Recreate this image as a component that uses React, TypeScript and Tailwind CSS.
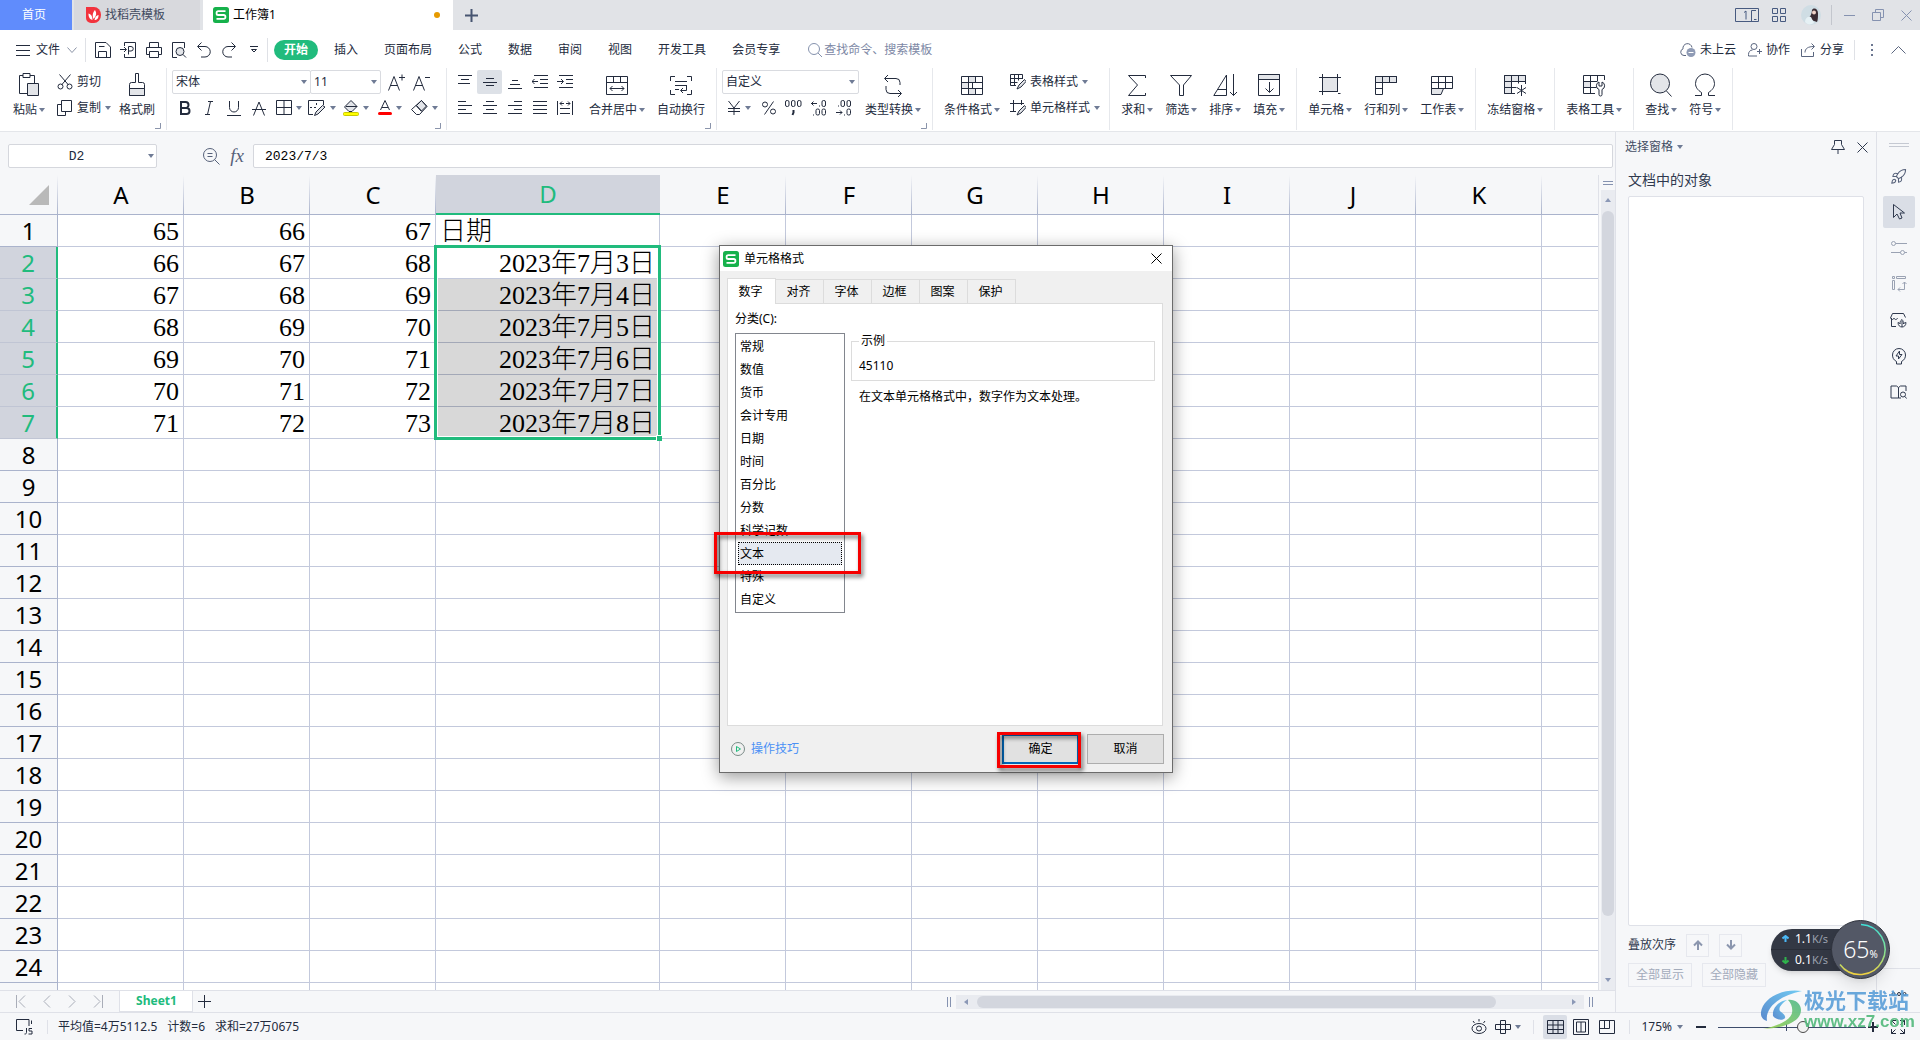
import React from "react";
import { Rocket } from "lucide-react";

type Kids = { children?: React.ReactNode };

function Svg({ w, h, sw = 1, className = "", children }: Kids & { w: number; h: number; sw?: number; className?: string }) {
  return (
    <svg width={w} height={h} viewBox={`0 0 ${w} ${h}`} fill="none" stroke="currentColor" strokeWidth={sw} className={"block shrink-0 " + className} aria-hidden="true">
      {children}
    </svg>
  );
}

const Caret = ({ className = "" }: { className?: string }) => (
  <svg width="6" height="4" viewBox="0 0 6 4" className={"block shrink-0 " + className} aria-hidden="true">
    <path d="M0 0h6L3 4z" fill="#6f7b95" />
  </svg>
);

const LogoS = () => (
  <svg width="16" height="16" viewBox="0 0 16 16" className="block shrink-0" aria-hidden="true">
    <rect width="16" height="16" rx="2.5" fill="#16b14b" />
    <path d="M12.5 4.2H5.2a1.6 1.6 0 0 0-1.6 1.6v.6A1.6 1.6 0 0 0 5.2 8h5.6a1.6 1.6 0 0 1 1.6 1.6v.6a1.6 1.6 0 0 1-1.6 1.6H3.5" fill="none" stroke="#fff" strokeWidth="1.8" />
  </svg>
);

/* ---------- ribbon icons ---------- */

const soft = "#e3e5e9";

const IcPaste = () => (
  <Svg w={24} h={24}>
    <path d="M10 20.5H2.5V2.5H6M13 2.5h4.5V10M6 .5h7v4H6z" />
    <path d="M10.5 10.5h11v12h-11z" fill={soft} />
  </Svg>
);
const IcCut = () => (
  <Svg w={16} h={16}>
    <path d="M2.5.5 11.5 11M13.5.5 4.5 11" />
    <circle cx="3.5" cy="12.5" r="2.5" />
    <circle cx="12.5" cy="12.5" r="2.5" />
  </Svg>
);
const IcCopy = () => (
  <Svg w={16} h={16}>
    <path d="M4.5.5h10v11h-10zM4.5 4.5h-4v11h8v-4" />
  </Svg>
);
const IcBrush = () => (
  <Svg w={24} h={24}>
    <path d="M10.5.5h3v9h4a2 2 0 0 1 2 2v11h-15v-11a2 2 0 0 1 2-2h4z" />
    <path d="M4.5 15.5h15v7h-15z" fill={soft} />
  </Svg>
);
const IcMerge = () => (
  <Svg w={24} h={24}>
    <path d="M1.5 3.5h21v18h-21zM1.5 9.5h21M8.5 3.5v6M15.5 3.5v6M5 15.5h14M7.5 13 5 15.5 7.5 18M16.5 13l2.5 2.5-2.5 2.5" />
  </Svg>
);
const IcWrap = () => (
  <Svg w={24} h={24}>
    <path d="M6 3.5H1.5V8M18 3.5h4.5V8M6 21.5H1.5V17M18 21.5h4.5V17M6 8.5h12M6 12.5h12M6 16.5h4M17.5 12.5v5H12M14 15l-2.5 2.5L14 20" />
  </Svg>
);
const IcConvert = () => (
  <Svg w={24} h={24}>
    <path d="M4 5.5h11a4 4 0 0 1 4 4V12M20 20.5H9a4 4 0 0 1-4-4V13M7 2 3.5 5.5 7 9M17 17l3.5 3.5L17 24" />
  </Svg>
);
const IcCond = () => (
  <Svg w={24} h={24}>
    <path d="M8.5 3.5h7v6h-7zM1.5 9.5h7v6h-7zM8.5 15.5h7v6h-7z" fill={soft} />
    <path d="M1.5 3.5h21v18h-21zM1.5 9.5h21M1.5 15.5h21M8.5 3.5v18M15.5 3.5v6M15.5 15.5v6M12.5 9.5v6" />
  </Svg>
);
const IcTableStyle = () => (
  <Svg w={16} h={16}>
    <path d="M6 11.5H.5V.5h12V5M.5 4.5h12M.5 8.5h7M4.5.5v11M8.5.5v6" />
    <path d="M14.5 5.5 9 11l-2 4 4-2 5-5.5z" fill={soft} />
  </Svg>
);
const IcCellStyle = () => (
  <Svg w={16} h={16}>
    <path d="M3.5 0v12M0 3.5h14M0 11.5h6M11.5 0v5" />
    <path d="M14.5 5.5 9 11l-2 4 4-2 5-5.5z" fill={soft} />
  </Svg>
);
const IcSum = () => (
  <Svg w={24} h={24}>
    <path d="M20.500 5V2.500h-17l9 9.500-9 10.500h17V20" />
  </Svg>
);
const IcFilter = () => (
  <Svg w={24} h={24}>
    <path d="M1.500 2.500h21L14.500 12v10.500h-4V12z" />
  </Svg>
);
const IcSort = () => (
  <Svg w={24} h={24}>
    <path d="M13.500 22.500V2L.8 22.500zM4.500 16.500h9M20.500 1v21.500M17 19l3.500 3.500L24 19" />
  </Svg>
);
const IcFill = () => (
  <Svg w={24} h={24}>
    <path d="M1.500 1.500h21v5h-21z" fill={soft} />
    <path d="M1.500 1.500h21v21h-21zM12.500 9v10M8.500 15.500l4 4 4-4" />
  </Svg>
);
const IcCell = () => (
  <Svg w={24} h={24}>
    <path d="M4.500 4.500h15v14h-15z" fill={soft} />
    <path d="M4.500 1v21M19.500 1v17M1 4.500h22M1 18.500h19M20 20.500h2.500" />
  </Svg>
);
const IcRowCol = () => (
  <Svg w={24} h={24}>
    <path d="M1.500 3.500h21v6h-21z" fill={soft} />
    <path d="M1.500 3.500h7v18h-7zM8.500 9.500h14v-6h-14M15.500 3.500v6M1.500 9.500h7M1.500 15.500h7" />
  </Svg>
);
const IcSheet = () => (
  <Svg w={24} h={24}>
    <path d="M1.500 15.500h12l-2.500 6H1.500z" fill={soft} />
    <path d="M22.500 15.500h-21v-12h21zM1.500 9.500h21M8.500 3.500v12M15.500 3.500v12" />
  </Svg>
);
const IcFreeze = () => (
  <Svg w={24} h={24}>
    <path d="M1.500 2.500h21v6h-21zM1.500 8.500h7v12h-7z" fill={soft} />
    <path d="M12 20.500H1.500v-18h21V11M1.500 8.500h21M1.500 14.500h12M8.500 2.500v18M15.500 2.500v8M18.500 12v11M14 14.500l9 6M23 14.500l-9 6" />
  </Svg>
);
const IcTools = () => (
  <Svg w={24} h={24}>
    <path d="M1.500 8.500h7v6h-7z" fill={soft} />
    <path d="M13 20.500H1.500v-18h21V7M1.500 8.500H15M1.500 14.500h13M8.500 2.500v18M15.500 2.500v6" />
    <path d="M17 9v4h3V9a4 4 0 0 1 0 7.500v5a1.500 1.500 0 0 1-3 0v-5A4 4 0 0 1 17 9z" fill="#fff" />
  </Svg>
);
const IcFind = () => (
  <Svg w={24} h={24}>
    <circle cx="11" cy="10.500" r="9.500" fill={soft} />
    <path d="m17.500 18 5 5.500" />
  </Svg>
);
const IcOmega = () => (
  <Svg w={24} h={24}>
    <path d="M2 22.500h6.500v-3C4.500 17 2.500 14 2.500 10.500a9.500 9.500 0 0 1 19 0c0 3.500-2 6.500-6 9v3H22" />
  </Svg>
);

/* ---------- ribbon pieces ---------- */

function Big({ icon, label, caret = true }: { icon: React.ReactNode; label: string; caret?: boolean }) {
  return (
    <button className="flex shrink-0 flex-col items-center px-[6px] pt-[3px]">
      {icon}
      <span className="mt-[5px] flex items-center gap-[2px] leading-4">
        {label}
        {caret && <Caret />}
      </span>
    </button>
  );
}

function Small({ icon, label, caret = false }: { icon: React.ReactNode; label: string; caret?: boolean }) {
  return (
    <button className="flex h-6 items-center gap-1">
      {icon}
      <span className="flex items-center gap-1">
        {label}
        {caret && <Caret />}
      </span>
    </button>
  );
}

const Sep = () => <span className="-mt-[2px] mx-[5px] block h-[62px] w-px shrink-0 bg-[#e6e8ec]" />;

const Corner = () => (
  <span className="absolute right-0 top-[53px] text-[#8a94ab]">
    <Svg w={6} h={6}>
      <path d="M5.500 0v5.500H0" />
    </Svg>
  </span>
);

const Tool = ({ label, wide = false, children }: Kids & { label: string; wide?: boolean }) => (
  <button aria-label={label} className={wide ? "flex h-6 w-[34px] items-center justify-center gap-1" : "flex h-6 w-[25px] items-center justify-center"}>
    {children}
    {wide && <Caret />}
  </button>
);

function Select({ label, value, className }: { label: string; value: string; className: string }) {
  return (
    <span className={"relative block " + className}>
      <select aria-label={label} className="h-6 w-full appearance-none rounded-[2px] border border-[#d9dbe0] bg-white pl-[3px] outline-none">
        <option>{value}</option>
      </select>
      <Caret className="pointer-events-none absolute right-1 top-[10px]" />
    </span>
  );
}

const Lines = ({ rows }: { rows: [number, number, number][] }) => (
  <Svg w={16} h={16}>
    {rows.map(([x1, x2, y]) => (
      <path key={y} d={`M${x1} ${y}.5H${x2}`} />
    ))}
  </Svg>
);

function TitleBar() {
  return (
    <header className="flex h-[30px] shrink-0 items-stretch bg-[#e1e3e7]">
      <button className="w-[72px] bg-[#608cfc] pr-1 text-white">首页</button>
      <button className="ml-[2px] flex w-[126px] items-center gap-1 bg-[#d8d9dd] pl-3 text-[#414a5f]">
        <svg width="15" height="16" viewBox="0 0 15 16" aria-hidden="true">
          <path d="M0 0h8a7 8 0 0 1 0 16H5a5 5 0 0 1-5-5z" fill="#f2333d" />
          <path d="M6.500 13C3 12 2.500 9 2.500 6.500 5 7 6.500 9 6.500 13zM7.500 12C6 8 7 5 9 3c2 3 1.500 6-1.500 9zM8.500 13c.5-3 2-4.500 4-5 .3 3-1.500 5-4 5z" fill="#fff" />
        </svg>
        找稻壳模板
      </button>
      <button className="ml-[3px] flex w-[250px] items-center gap-1 bg-white pl-[10px] pr-[13px] text-black">
        <LogoS />
        工作簿1
        <span className="ml-auto size-[6px] rounded-full bg-[#e69a00]" />
      </button>
      <button aria-label="新建" className="ml-3 text-[#475571]">
        <Svg w={13} h={13} sw={2}>
          <path d="M6.500 0v13M0 6.500h13" />
        </Svg>
      </button>
      <div className="ml-auto flex items-center pr-2 text-[#475a80]">
        <Svg w={24} h={14}>
          <path d="M.5.5h23v13H.5zM21 2.500h-4.500v11M19 11.500h2.500M9 4.500l2-1.500v8.500" />
        </Svg>
        <Svg w={14} h={14} className="ml-[13px]">
          <path d="M.5.5h5v5h-5zM8.500.5h5v5h-5zM.5 8.500h5v5h-5zM8.500 8.500h5v5h-5z" />
        </Svg>
        <svg width="20" height="20" viewBox="0 0 20 20" className="ml-[15px]" aria-hidden="true">
          <circle cx="10" cy="10" r="10" fill="#cfdde4" />
          <path d="M11 5c2-3 6-1 6 3 0 3 0 7-1 9l-3-1-6-3c2-1 4-4 4-8z" fill="#3a2c33" />
          <circle cx="13" cy="7.500" r="2" fill="#f0d3c8" />
          <path d="M4 17c0-4 3-6 6-5l3 6c-3 2-7 2-9-1z" fill="#e6f1f5" />
        </svg>
        <span className="ml-[10px] h-5 w-px bg-[#c3c6cd]" />
        <div className="ml-3 flex items-center gap-[17px] text-[#8592b0]">
          <button aria-label="最小化">
            <Svg w={11} h={11}><path d="M0 5.500h11" /></Svg>
          </button>
          <button aria-label="还原">
            <Svg w={12} h={12}><path d="M3.500 3V.5h8v8H9M.5 3.500h8v8h-8z" /></Svg>
          </button>
          <button aria-label="关闭">
            <Svg w={11} h={11}><path d="m.5.5 10 10M10.500.5l-10 10" /></Svg>
          </button>
        </div>
      </div>
    </header>
  );
}

function MenuBar() {
  const menus = ["插入", "页面布局", "公式", "数据", "审阅", "视图", "开发工具", "会员专享"];
  return (
    <nav className="flex h-[38px] shrink-0 items-center bg-white pl-4 pt-px">
      <button className="flex items-center gap-[6px]">
        <Svg w={14} h={12}><path d="M0 1.500h14M0 6.500h14M0 11.500h14" /></Svg>
        文件
        <Svg w={10} h={6} className="ml-[1px] text-[#8a93a6]"><path d="m.5.5 4.500 5L9.500.5" /></Svg>
      </button>
      <span className="ml-2 h-6 w-px bg-[#dfe1e6]" />
      <div className="ml-[9px] flex items-center gap-[9px]">
        <button aria-label="保存"><Svg w={16} h={16}><path d="M.5.5H11l4.500 4.500v10.500H.5zM3.500 15.500v-6h8v6M4 4.500h5.500" /></Svg></button>
        <button aria-label="输出为PDF"><Svg w={17} h={16}><path d="M4.500 4V.5h11v15h-11V12M0 7.500h6M4 5l2.500 2.500L4 10M8.500 12.500V4.500h2.500a2.200 2.200 0 0 1 0 4.500H8" /></Svg></button>
        <button aria-label="打印"><Svg w={16} h={16}><path d="M3.500 5V.5h9V5M3.500 12.500h-3v-7h15v7h-3M3.500 9.500h9v6h-9z" /></Svg></button>
        <button aria-label="打印预览"><Svg w={16} h={16}><path d="M6 15.500H1.500V.5h12V6" /><circle cx="9" cy="9.500" r="4" fill={soft} /><path d="m12 12.500 3 3" /></Svg></button>
        <button aria-label="撤销"><Svg w={16} h={16}><path d="M5.500.5 1.500 4.500l4 4M2 4.500h7a5 5 0 0 1 0 10.500H5" /></Svg></button>
        <button aria-label="恢复"><Svg w={16} h={16}><path d="m10.500.5 4 4-4 4M14 4.500H7A5 5 0 0 0 7 15h4" /></Svg></button>
        <button aria-label="更多" className="px-1"><Svg w={8} h={8}><path d="M0 .5h8M1.500 3.500 4 6l2.500-2.500z" /></Svg></button>
      </div>
      <span className="ml-[5px] h-6 w-px bg-[#dfe1e6]" />
      <button className="ml-[6px] h-5 w-11 rounded-full bg-[#21bb7d] font-bold leading-5 text-white">开始</button>
      <div className="ml-4 flex gap-[26px]">
        {menus.map((m) => <button key={m} className="whitespace-nowrap">{m}</button>)}
      </div>
      <label className="ml-7 flex items-center gap-[2px] text-[#8592ad]">
        <Svg w={14} h={14}><circle cx="6" cy="6" r="5.500" /><path d="m10 10 4 4" /></Svg>
        <input aria-label="查找命令、搜索模板" placeholder="查找命令、搜索模板" className="w-32 outline-none placeholder:text-[#7d88a5]" />
      </label>
      <div className="ml-auto flex items-center whitespace-nowrap pr-[14px]">
        <button className="flex items-center gap-1">
          <Svg w={16} h={14} className="text-[#5b667f]">
            <path d="M6 12.500H4a3.400 3.400 0 0 1-1-6.600A4.500 4.500 0 0 1 12 4.500" />
            <circle cx="11" cy="9.500" r="4.500" fill="#8f9bb5" stroke="none" />
            <path d="M8.500 9.500h5" stroke="#fff" />
          </Svg>
          未上云
        </button>
        <button className="ml-3 flex items-center gap-1">
          <Svg w={14} h={14} className="text-[#5b667f]"><circle cx="6" cy="3.500" r="3" /><path d="M4.500 7C2 7 .5 9 .5 11.500v1.500H9M11.500 6v5M9 8.500h5" /></Svg>
          协作
        </button>
        <button className="ml-[11px] flex items-center gap-1">
          <Svg w={15} h={14} className="text-[#5b667f]"><path d="M.5 6v7.500h12V9M4 9.500c0-4 3-6 9-6M10.500.5l3 3-3 3" /></Svg>
          分享
        </button>
        <span className="ml-[10px] h-5 w-px bg-[#dfe1e6]" />
        <Svg w={2} h={12} sw={2} className="ml-4 text-[#6b7690]"><path d="M1 0v2M1 5v2M1 10v2" /></Svg>
        <Svg w={15} h={8} className="ml-[18px] text-[#5b667f]"><path d="m.5 7.500 7-7 7 7" /></Svg>
      </div>
    </nav>
  );
}

function Ribbon() {
  return (
    <div className="relative z-10 flex h-16 shrink-0 items-start overflow-hidden whitespace-nowrap border-b border-[#e4e6ea] bg-white pl-[7px] pt-[2px]">
      <div className="relative flex">
        <Big icon={<IcPaste />} label="粘贴" />
        <div className="flex flex-col gap-[2px] pl-[6px] pr-[2px]">
          <Small icon={<IcCut />} label="剪切" />
          <Small icon={<IcCopy />} label="复制" caret />
        </div>
        <Big icon={<IcBrush />} label="格式刷" caret={false} />
        <Corner />
      </div>
      <Sep />
      <div className="relative flex w-[269px] flex-col gap-[2px]">
        <div className="flex">
          <Select label="字体" value="宋体" className="w-[139px]" />
          <Select label="字号" value="11" className="-ml-px w-[71px]" />
          <button aria-label="增大字号" className="ml-[7px]"><Svg w={17} h={17}><path d="M.5 16.500 6 2.500l5.500 14M2.500 11.500h7M14 .5v6M11 3.500h6" /></Svg></button>
          <button aria-label="减小字号" className="ml-2"><Svg w={17} h={17}><path d="M.5 16.500 6 2.500l5.500 14M2.500 11.500h7M12 3.500h5" /></Svg></button>
        </div>
        <div className="flex">
          <Tool label="加粗"><Svg w={12} h={14} sw={2}><path d="M2 1h4.500a3 3 0 0 1 0 6H2zM2 7h5.500a3 3 0 0 1 0 6H2z" /></Svg></Tool>
          <Tool label="倾斜"><Svg w={12} h={14}><path d="M5 .5h5M2 13.500h5M7.500.5l-3 13" /></Svg></Tool>
          <Tool label="下划线"><Svg w={14} h={15}><path d="M2.500 0v6.500a4.500 4.500 0 0 0 9 0V0M0 14.500h14" /></Svg></Tool>
          <Tool label="删除线"><Svg w={14} h={15}><path d="M1.500 14.500 7 1l5.500 13.500M0 8.500h14" /></Svg></Tool>
          <Tool label="边框" wide><Svg w={16} h={16}><path d="M.5.5h15v14H.5zM8 .5v14M.5 7.500h15" /></Svg></Tool>
          <Tool label="绘图边框" wide><Svg w={18} h={16}><path d="M5 14.500H.5V.5h15V5M2 7.500h2M6 7.500h2M8.500 3v2" /><path d="M14.500 5.500 8 12l-1.500 3.500L10 14l7-7z" fill={soft} /></Svg></Tool>
          <Tool label="填充颜色" wide><Svg w={16} h={16}><path d="m8 .5 6 6-5 5H6L1.500 7z" fill={soft} /><path d="M3 6.500h11" /><rect x=".5" y="12.500" width="15" height="3" rx="1" fill="#ff0" stroke="#c9c900" /></Svg></Tool>
          <Tool label="字体颜色" wide><Svg w={14} h={16}><path d="M2.500 10 7 .5 11.500 10M4 7.500h6" /><rect y="12" width="14" height="3" rx="1.500" fill="#f00" stroke="none" /></Svg></Tool>
          <Tool label="清除" wide><Svg w={17} h={16}><path d="m5.500 5.500 5-5 5 5.500-5 5z" fill={soft} /><path d="M10.500.5.5 9.500l5 5h3l7.500-8zM5 5.500l5.500 6" /></Svg></Tool>
        </div>
        <Corner />
      </div>
      <Sep />
      <div className="flex flex-col gap-[2px]">
        <div className="flex">
          <Tool label="顶端对齐"><Lines rows={[[1, 15, 1], [4, 12, 5], [1, 13, 9]]} /></Tool>
          <button aria-label="垂直居中" aria-pressed="true" className="flex h-6 w-[25px] items-center justify-center rounded-[2px] bg-[#dde1e7]"><Lines rows={[[4, 12, 4], [1, 15, 8], [4, 12, 11]]} /></button>
          <Tool label="底端对齐"><Lines rows={[[5, 11, 6], [3, 13, 10], [1, 15, 14]]} /></Tool>
          <Tool label="减少缩进"><Svg w={16} h={16}><path d="M2 1.500h14M8 5.500h8M8 9.500h8M2 13.500h14M0 7.500h6M2.500 5 0 7.500 2.500 10" /></Svg></Tool>
          <Tool label="增加缩进"><Svg w={16} h={16}><path d="M2 1.500h14M9 5.500h7M9 9.500h7M2 13.500h14M0 7.500h6M4 5l2.500 2.500L4 10" /></Svg></Tool>
        </div>
        <div className="flex">
          <Tool label="左对齐"><Lines rows={[[1, 9, 1], [1, 15, 5], [1, 9, 9], [1, 15, 13]]} /></Tool>
          <Tool label="居中"><Lines rows={[[4, 12, 1], [1, 15, 5], [4, 12, 9], [1, 15, 13]]} /></Tool>
          <Tool label="右对齐"><Lines rows={[[7, 15, 1], [1, 15, 5], [7, 15, 9], [1, 15, 13]]} /></Tool>
          <Tool label="两端对齐"><Lines rows={[[1, 15, 1], [1, 15, 5], [1, 15, 9], [1, 15, 13]]} /></Tool>
          <Tool label="分散对齐"><Svg w={16} h={16}><path d="M.5 1v14M15.500 1v14M3 8.500h10M3 13.500h10M3 3.500h4M9 3.500h4M5 1.500l-2 2 2 2M11 1.500l2 2-2 2" /></Svg></Tool>
        </div>
      </div>
      <div className="relative flex pl-[6px]">
        <Big icon={<IcMerge />} label="合并居中" />
        <Big icon={<IcWrap />} label="自动换行" caret={false} />
        <Corner />
      </div>
      <Sep />
      <div className="relative flex">
        <div className="flex w-[137px] flex-col gap-[2px]">
          <Select label="数字格式" value="自定义" className="w-full" />
          <div className="flex">
            <Tool label="货币" wide><Svg w={14} h={16}><path d="M1.500 1 7 8l5.500-7M7 8v7M1 8.500h12M1 11.500h12" /></Svg></Tool>
            <Tool label="百分比"><Svg w={14} h={14}><circle cx="3" cy="3.500" r="2.500" /><circle cx="11" cy="10.500" r="2.500" /><path d="M11.500.5 2.500 13.500" /></Svg></Tool>
            <Tool label="千位分隔"><Svg w={17} h={16}><rect x=".5" y=".5" width="3.500" height="6" rx="1.500" /><rect x="6.500" y=".5" width="3.500" height="6" rx="1.500" /><rect x="12.500" y=".5" width="3.500" height="6" rx="1.500" /><path d="M8.500 10v2.500L7.500 15" strokeWidth="2" /></Svg></Tool>
            <Tool label="增加小数位"><Svg w={17} h={16}><path d="M1 3.500h6M3.500 1.500l-2 2 2 2M9 6h1M3 15h1" /><rect x="12" y=".5" width="3.500" height="6" rx="1.500" /><rect x="6" y="9" width="3.500" height="6" rx="1.500" /><rect x="12" y="9" width="3.500" height="6" rx="1.500" /></Svg></Tool>
            <Tool label="减少小数位"><Svg w={17} h={16}><path d="M1 12.500h6M5 10.500l2 2-2 2M9 15h1M3 6h1" /><rect x="6" y=".5" width="3.500" height="6" rx="1.500" /><rect x="12" y=".5" width="3.500" height="6" rx="1.500" /><rect x="12" y="9" width="3.500" height="6" rx="1.500" /></Svg></Tool>
          </div>
        </div>
        <Big icon={<IcConvert />} label="类型转换" />
        <Corner />
      </div>
      <Sep />
      <Big icon={<IcCond />} label="条件格式" />
      <div className="flex flex-col gap-[2px] px-1">
        <Small icon={<IcTableStyle />} label="表格样式" caret />
        <Small icon={<IcCellStyle />} label="单元格样式" caret />
      </div>
      <Sep />
      <Big icon={<IcSum />} label="求和" />
      <Big icon={<IcFilter />} label="筛选" />
      <Big icon={<IcSort />} label="排序" />
      <Big icon={<IcFill />} label="填充" />
      <Sep />
      <Big icon={<IcCell />} label="单元格" />
      <Big icon={<IcRowCol />} label="行和列" />
      <Big icon={<IcSheet />} label="工作表" />
      <Sep />
      <Big icon={<IcFreeze />} label="冻结窗格" />
      <Sep />
      <Big icon={<IcTools />} label="表格工具" />
      <Sep />
      <Big icon={<IcFind />} label="查找" />
      <Big icon={<IcOmega />} label="符号" />
      <Sep />
    </div>
  );
}

/* ---------- spreadsheet ---------- */

const columns = ["A", "B", "C", "D", "E", "F", "G", "H", "I", "J", "K"];
const cells: Record<number, string[]> = {
  1: ["65", "66", "67", "日期"],
  2: ["66", "67", "68", "2023年7月3日"],
  3: ["67", "68", "69", "2023年7月4日"],
  4: ["68", "69", "70", "2023年7月5日"],
  5: ["69", "70", "71", "2023年7月6日"],
  6: ["70", "71", "72", "2023年7月7日"],
  7: ["71", "72", "73", "2023年7月8日"],
};
const lastRow = 24;
const rowNumbers = Array.from({ length: lastRow + 1 }, (_, i) => i + 1);

function FormulaBar() {
  return (
    <div className="flex h-[43px] shrink-0 items-start pl-2 pr-[2px] pt-3">
      <span className="relative block w-[149px]">
        <input aria-label="名称框" defaultValue="D2" className="h-6 w-full rounded-[2px] border border-[#d5d7dd] bg-white pr-3 text-center font-['Liberation_Mono','Noto_Sans_CJK_SC',monospace] text-[13px] outline-none" />
        <Caret className="absolute right-[3px] top-[10px]" />
      </span>
      <div className="ml-[46px] flex h-6 items-center gap-2 text-[#56617a]">
        <Svg w={17} h={17}><circle cx="7" cy="7" r="6.500" /><path d="M4.500 5.500h5M4.500 8.500h5M11.500 11.500l5 5" /></Svg>
        <button aria-label="插入函数" className="w-[18px] font-['Liberation_Serif',serif] text-[19px] italic leading-5">fx</button>
      </div>
      <input aria-label="编辑栏" defaultValue="2023/7/3" className="ml-[7px] h-6 min-w-0 flex-1 rounded-[2px] border border-[#d5d7dd] bg-white pl-[11px] font-['Liberation_Mono','Noto_Sans_CJK_SC',monospace] text-[13px] text-black outline-none" />
    </div>
  );
}

function Grid() {
  return (
    <div className="min-w-0 flex-1 overflow-hidden border-r border-[#dfe1e8]">
      <table className="w-full table-fixed border-separate border-spacing-0 text-black">
        <colgroup>
          <col className="w-[58px]" />
          {columns.map((c) => <col key={c} className={c === "D" ? "w-[224px]" : "w-[126px]"} />)}
          <col />
        </colgroup>
        <thead>
          <tr className="h-10 text-2xl">
            <th className="relative border-b border-[#aab3cc] p-0">
              <svg width="20" height="20" viewBox="0 0 20 20" className="ml-auto mr-[9px]" aria-hidden="true"><path d="M20 0v20H0z" fill="#b9b9b9" /></svg>
              <span className="absolute right-0 top-0 h-full w-px bg-linear-to-b from-transparent to-[#aab3cc]" />
            </th>
            {columns.map((c) => (
              <th key={c} scope="col" className={c === "D" ? "border-b-2 border-[#21bb7d] bg-[#d1d4dd] p-0 font-normal leading-9 text-[#21bb7d]" : "relative border-b border-[#aab3cc] p-0 font-normal leading-9"}>
                {c}
                {c !== "D" && <span className="absolute right-0 top-0 h-full w-px bg-linear-to-b from-transparent to-[#aab3cc]" />}
              </th>
            ))}
            <th className="border-b border-[#aab3cc]" />
          </tr>
        </thead>
        <tbody>
          {rowNumbers.map((r) => {
            const picked = r >= 2 && r <= 7;
            return (
              <tr key={r} className="h-8">
                <th scope="row" className={picked ? "border-b border-r-2 border-b-[#c0c5d4] border-r-[#21bb7d] bg-[#d1d4dd] p-0 text-2xl font-normal leading-[31px] text-[#21bb7d]" : "border-b border-r border-[#aab3cc] p-0 text-2xl font-normal leading-[31px]"}>
                  {r <= lastRow && r}
                </th>
                {columns.map((c, i) => {
                  const fill = c === "D" && r > 2 && r <= 7 ? "border-b-[#a3a8b7] bg-[#d8d8d8]" : "bg-white";
                  return (
                    <td key={c} className={"relative border-b border-r border-[#c3c9dc] px-1 pb-0 pt-[3px] font-['Liberation_Serif','Noto_Sans_CJK_SC',serif] text-[26px] font-light leading-7 whitespace-nowrap " + fill + (r === 1 && c === "D" ? " text-left" : " text-right")}>
                      {cells[r]?.[i]}
                      {r === 2 && c === "D" && (
                        <span className="pointer-events-none absolute -left-[2px] -top-[2px] z-10 block h-[195px] w-[227px] border-[3px] border-[#21bb7d] outline-1 -outline-offset-4 outline-white">
                          <span className="absolute -bottom-[4px] -right-[4px] size-[6px] border-l border-t border-white bg-[#21bb7d]" />
                        </span>
                      )}
                    </td>
                  );
                })}
                <td className="border-b border-[#c3c9dc] bg-white p-0" />
              </tr>
            );
          })}
        </tbody>
      </table>
    </div>
  );
}

const Arrow = ({ d }: { d: string }) => (
  <svg width="6" height="6" viewBox="0 0 6 6" aria-hidden="true" className="block shrink-0"><path d={d} fill="#8b98b6" /></svg>
);

function VScroll() {
  return (
    <div className="flex w-4 shrink-0 flex-col items-center pl-[2px]">
      <span className="mt-[6px] h-1 w-[10px] shrink-0 border-y border-[#8592b0]" />
      <div className="mt-[5px] flex w-full flex-1 flex-col items-center bg-[#e9ebf0] py-[7px]">
        <Arrow d="M0 5h6L3 1z" />
        <span className="mt-2 w-3 flex-1 rounded-full bg-[#d3d6de]" />
        <span className="mt-[61px]"><Arrow d="M0 1h6L3 5z" /></span>
      </div>
    </div>
  );
}

function SheetBar() {
  return (
    <div className="flex h-[22px] shrink-0 items-center border-t border-[#dfe1e8]">
      <div className="flex w-[119px] items-center gap-[17px] pl-4 text-[#a9adb8]">
        <Svg w={10} h={13}><path d="M.5 0v13M9 .5l-6 6 6 6" /></Svg>
        <Svg w={8} h={13}><path d="m7 .5-6 6 6 6" /></Svg>
        <Svg w={8} h={13}><path d="m1 .5 6 6-6 6" /></Svg>
        <Svg w={10} h={13}><path d="M9.500 0v13M1 .5l6 6-6 6" /></Svg>
      </div>
      <button className="-mt-px h-[21px] w-[74px] border border-t-0 border-[#dfe1e8] bg-white pl-px font-bold text-[#21bb7d]">Sheet1</button>
      <button aria-label="新建工作表" className="ml-[5px]">
        <Svg w={13} h={13}><path d="M6.500 0v13M0 6.500h13" /></Svg>
      </button>
      <div className="ml-auto flex w-[646px] items-center gap-[5px]">
        <span className="h-[10px] w-1 border-x border-[#8592b0]" />
        <div className="flex h-[14px] flex-1 items-center bg-[#e9ebf0] px-[7px]">
          <Arrow d="M5 0v6L1 3z" />
          <span className="ml-2 h-3 flex-1 rounded-full bg-[#d3d6de]" />
          <span className="ml-[75px]"><Arrow d="M1 0v6l4-3z" /></span>
        </div>
        <span className="h-[10px] w-1 border-x border-[#8592b0]" />
      </div>
      <span className="w-[22px]" />
    </div>
  );
}

function SelectionPane() {
  return (
    <aside className="flex w-[261px] shrink-0 flex-col border-l border-[#dfe1e8] pl-3 pr-3 text-[#2f394e]">
      <div className="-ml-[3px] flex h-[30px] items-center">
        <button className="flex items-center gap-1 text-[#434e64]">选择窗格<Caret /></button>
        <button aria-label="固定" className="ml-auto"><Svg w={14} h={14}><path d="M3.500.5h7v4l3 5H.5l3-5zM7 9.500V14" /></Svg></button>
        <button aria-label="关闭" className="-mr-1 ml-3"><Svg w={11} h={11}><path d="m.5.5 10 10M10.500.5l-10 10" /></Svg></button>
      </div>
      <h2 className="mt-2 h-[26px] text-sm leading-5">文档中的对象</h2>
      <div className="flex-1 rounded-[2px] border border-[#dfe1e8] bg-white" />
      <div className="mt-[7px] flex h-6 items-center">
        叠放次序
        <button aria-label="上移" className="ml-[10px] flex size-[23px] items-center justify-center border border-[#e6e8ee] text-[#8b96ae]"><Svg w={10} h={10} sw={2}><path d="M5 10V2M1 5.500l4-4 4 4" /></Svg></button>
        <button aria-label="下移" className="ml-[10px] flex size-[23px] items-center justify-center border border-[#e6e8ee] text-[#8b96ae]"><Svg w={10} h={10} sw={2}><path d="M5 0v8M1 4.500l4 4 4-4" /></Svg></button>
      </div>
      <div className="mb-[25px] mt-[6px] flex gap-[10px] text-[#a3abbb]">
        <button className="h-6 w-16 border border-[#e6e8ee]">全部显示</button>
        <button className="h-6 w-16 border border-[#e6e8ee]">全部隐藏</button>
      </div>
    </aside>
  );
}

function SideRail() {
  return (
    <div className="flex w-11 shrink-0 flex-col items-center border-l border-[#dfe1e8]">
      <span className="mt-[11px] h-1 w-5 shrink-0 border-y border-[#c5c9d2]" />
      <div className="mt-[13px] flex flex-col gap-1 text-[#2f394e]">
        <button aria-label="快捷" className="flex size-8 items-center justify-center text-[#56617a]"><Rocket size={17} strokeWidth={1.500} /></button>
        <button aria-label="选择" className="flex size-8 items-center justify-center rounded-[2px] bg-[#dadee6]"><Svg w={14} h={18}><path d="M1.500 1.500v13L5 11l2.500 5 2.500-1-2-5h4.500z" /></Svg></button>
        <button aria-label="属性" className="flex size-8 items-center justify-center text-[#9aa2b3]"><Svg w={16} h={14}><circle cx="2.500" cy="2.500" r="2" /><path d="M4.500 2.500H16M0 11.500h9.500M13.500 11.500H16" /><circle cx="11.500" cy="11.500" r="2" /></Svg></button>
        <button aria-label="转置" className="flex size-8 items-center justify-center text-[#9aa2b3]"><Svg w={16} h={16}><path d="M1.500.5h2v2h-2zM5.500.5h9v2h-9zM1.500 4.500h2v9h-2zM13.500 6v7.500H7M11.500 8l2-2 2 2M9 11.500l-2 2 2 2" /></Svg></button>
        <button aria-label="素材" className="flex size-8 items-center justify-center"><Svg w={17} h={16}><path d="M1.500 6v8.500H6M15.500 5.500l-2-4h-11l-2 4.500c1 2 3 2 3.500 0 .5 2 3 2 3.500 0" /><path d="M8 10.500c1 0 1.500.5 2 1.500 0-2 .5-3.500 2-4.500 1 1 1.500 2.500 1.500 4.500.5-1 1.500-1.500 2.500-1.500 0 3-2 4.500-4 4.500S8 13.500 8 10.500zM12 9v6" /></Svg></button>
        <button aria-label="推荐" className="flex size-8 items-center justify-center"><Svg w={16} h={17}><path d="M5.500 13.500C2.500 12 1.500 9.500 1.500 7a6.500 6.500 0 0 1 13 0c0 2.500-1 5-4 6.500v2.500h-5zM8.500 3 5 8h2.500v3L11 6.500H8.500z" /></Svg></button>
        <button aria-label="帮助" className="flex size-8 items-center justify-center"><Svg w={17} h={15}><path d="M8.500 13H1V1h5.500l2 1.500L10.500 1H16v5M8.500 2.500V13M11 13h-2.500" /><circle cx="13" cy="9.500" r="2.500" /><path d="m15 11.500 1.500 2" /></Svg></button>
      </div>
      <div className="mb-[15px] mt-auto w-full border-t border-[#dfe1e8] pt-[22px]">
        <Svg w={16} h={6} className="mx-auto"><circle cx="2.500" cy="3" r="1.500" /><circle cx="8" cy="3" r="1.500" /><circle cx="13.500" cy="3" r="1.500" /></Svg>
      </div>
    </div>
  );
}

function StatusBar() {
  return (
    <footer className="flex h-7 shrink-0 items-center border-t border-[#dfe1e8] bg-[#f6f7f9]">
      <Svg w={17} h={16} className="ml-4"><path d="M13 7V.5H.5v11H7M15.500 5V1.500M10.500 9v4.500a1.500 1.500 0 0 1-2 1.500M16 9.500h-3v2.500h3V15h-3.500" /></Svg>
      <span className="ml-[14px] h-[14px] w-px bg-[#dfe1e8]" />
      <p className="ml-[10px] flex gap-[10px]">
        <span>平均值=4万5112.5</span>
        <span>计数=6</span>
        <span>求和=27万0675</span>
      </p>
      <div className="ml-auto flex items-center pr-[15px]">
        <button aria-label="护眼模式"><Svg w={16} h={16}><ellipse cx="8" cy="9.500" rx="7" ry="5" /><circle cx="8" cy="9.500" r="2.500" /><path d="M8 0v2.500M2 2l1.500 2M14 2l-1.500 2" /></Svg></button>
        <button aria-label="阅读模式" className="ml-2 flex items-center gap-1"><Svg w={16} h={14}><path d="M5.500.5h5v13h-5zM.5 4.500h15v5H.5z" /></Svg><Caret /></button>
        <span className="ml-3 h-[14px] w-px bg-[#dfe1e8]" />
        <button aria-label="普通视图" aria-pressed="true" className="ml-[9px] flex size-6 items-center justify-center rounded-[2px] bg-[#dadee6]"><Svg w={17} h={14}><path d="M.5.5h16v13H.5zM.5 5h16M.5 9.500h16M6 .5v13M11 .5v13" /></Svg></button>
        <button aria-label="页面布局" className="ml-[6px]"><Svg w={16} h={16}><path d="M.5.5h15v15H.5zM3.500 3h9v10h-9zM8 3v10" /></Svg></button>
        <button aria-label="分页预览" className="ml-[10px]"><Svg w={16} h={14}><path d="M.5.5h15v13H.5zM5.500.5v8M10.500.5v8M.5 8.500h10" /></Svg></button>
        <span className="ml-[14px] h-[14px] w-px bg-[#dfe1e8]" />
        <button className="ml-[11px] flex items-center gap-[5px]">175%<Caret /></button>
        <button aria-label="缩小" className="ml-[13px]"><Svg w={10} h={10} sw={2}><path d="M0 5h10" /></Svg></button>
        <span className="relative ml-3 block h-3 w-[148px]">
          <span className="absolute inset-x-0 top-[6px] h-px bg-[#3d4c6b]" />
          <span className="absolute left-[68px] top-[3px] h-[7px] w-px bg-[#3d4c6b]" />
          <input aria-label="缩放比例" type="range" defaultValue="58" className="absolute inset-0 w-full appearance-none bg-transparent [&::-webkit-slider-thumb]:size-3 [&::-webkit-slider-thumb]:appearance-none [&::-webkit-slider-thumb]:rounded-full [&::-webkit-slider-thumb]:border [&::-webkit-slider-thumb]:border-[#4a4a4a] [&::-webkit-slider-thumb]:bg-[#f2f2f2]" />
        </span>
        <button aria-label="放大" className="ml-[2px]"><Svg w={10} h={10} sw={2}><path d="M0 5h10M5 0v10" /></Svg></button>
        <button aria-label="全屏" className="ml-[13px]"><Svg w={14} h={14}><path d="M5 .5H.5V5M.5.5l4 4M9 .5h4.500V5M13.500.5l-4 4M5 13.500H.5V9M.5 13.500l4-4M9 13.500h4.500V9M13.500 13.500l-4-4" /></Svg></button>
      </div>
    </footer>
  );
}

/* ---------- dialog ---------- */

const categories = ["常规", "数值", "货币", "会计专用", "日期", "时间", "百分比", "分数", "科学记数", "文本", "特殊", "自定义"];

function FormatDialog() {
  return (
    <section role="dialog" aria-label="单元格格式" className="absolute left-[719px] top-[245px] z-20 flex w-[454px] flex-col border border-[#6b6b6b] bg-[#f0f0f0] text-black shadow-[0_4px_16px_rgba(0,0,0,0.4)]">
      <div className="flex h-[25px] items-center gap-[5px] bg-white pl-[3px] pr-[10px]">
        <LogoS />
        单元格格式
        <button aria-label="关闭" className="ml-auto"><Svg w={11} h={11}><path d="m.5.5 10 10M10.500.5l-10 10" /></Svg></button>
      </div>
      <div role="tablist" className="ml-[7px] mt-[7px] flex items-end">
        <button role="tab" aria-selected="true" className="z-10 -mb-px h-[26px] w-[49px] border border-b-0 border-[#dcdcdc] bg-white pr-[2px]">数字</button>
        {["对齐", "字体", "边框", "图案", "保护"].map((t) => (
          <button key={t} role="tab" className="h-6 w-12 border border-b-0 border-l-0 border-[#dcdcdc] bg-[#f0f0f0] pr-[2px]">{t}</button>
        ))}
      </div>
      <div className="ml-[7px] mr-[9px] flex h-[423px] flex-col border border-[#dcdcdc] bg-white px-[7px] pt-[7px]">
        <span id="cat" className="leading-4">分类(C):</span>
        <div className="mt-[6px] flex items-start gap-[6px]">
          <ul role="listbox" aria-labelledby="cat" className="w-[110px] border border-[#82868e] px-[2px] py-px">
            {categories.map((c) => (
              <li key={c} role="option" aria-selected={c === "文本"} className={c === "文本" ? "h-[23px] bg-[#e5e9f0] pl-[2px] leading-[23px] outline-1 -outline-offset-1 outline-dotted outline-black" : "h-[23px] pl-[2px] leading-[23px]"}>
                {c}
              </li>
            ))}
          </ul>
          <div className="flex-1">
            <fieldset className="h-12 border border-[#dcdcdc] pl-[7px]">
              <legend className="px-[2px] leading-4">示例</legend>
              <p className="mt-[9px] leading-4">45110</p>
            </fieldset>
            <p className="mt-2 pl-2 leading-4">在文本单元格格式中，数字作为文本处理。</p>
          </div>
        </div>
      </div>
      <div className="flex h-[46px] items-center pl-[11px] pr-2">
        <a href="#tips" className="flex items-center gap-[6px] text-[#4a90f5]">
          <Svg w={14} h={14} className="text-[#7a8a86]"><circle cx="7" cy="7" r="6.500" /><path d="M5.500 4.500 9.500 7l-4 2.500z" stroke="#21bb7d" /></Svg>
          操作技巧
        </a>
        <button className="ml-auto h-[30px] w-[77px] border-2 border-[#0067b8] bg-[#e1e1e1]">确定</button>
        <button className="ml-2 h-[30px] w-[77px] border border-[#adadad] bg-[#e1e1e1]">取消</button>
      </div>
      <span className="pointer-events-none absolute -left-[6px] top-[286px] h-[42px] w-[147px] border-[3px] border-[#f60000] drop-shadow-[2px_3px_2px_rgba(0,0,0,0.6)]" />
      <span className="pointer-events-none absolute left-[277px] top-[486px] h-9 w-[84px] border-[3px] border-[#f60000] drop-shadow-[2px_3px_2px_rgba(0,0,0,0.6)]" />
    </section>
  );
}

function SpeedWidget() {
  return (
    <div className="absolute bottom-[61px] right-[30px] z-20 flex items-center">
      <div className="-mr-5 h-[42px] w-20 rounded-l-full bg-[#333844] text-xs text-white shadow-md">
        <p className="flex h-[21px] items-center gap-[6px] border-b border-[#2a2e38] pl-[11px]">
          <Svg w={7} h={7} sw={2} className="text-[#4ab7f5]"><path d="M3.500 7V1M.5 3.500l3-2.500 3 2.500" /></Svg>
          <span>1.1<span className="text-[11px] text-[#9aa0ad]">K/s</span></span>
        </p>
        <p className="flex h-[21px] items-center gap-[6px] pl-[11px]">
          <Svg w={7} h={7} sw={2} className="text-[#2fb24c]"><path d="M3.500 0v6M.5 3.500l3 2.500 3-2.500" /></Svg>
          <span>0.1<span className="text-[11px] text-[#9aa0ad]">K/s</span></span>
        </p>
      </div>
      <div className="relative flex size-[59px] items-center justify-center rounded-full border border-[#2f333d] bg-[#535866] text-white shadow-lg">
        <svg width="57" height="57" viewBox="0 0 57 57" className="absolute inset-0" fill="none" strokeWidth="1.500" aria-hidden="true">
          <defs>
            <linearGradient id="arc" x1="0" y1="0" x2="0" y2="1">
              <stop offset="0" stopColor="#3fe0d8" />
              <stop offset="0.6" stopColor="#8fe08a" />
              <stop offset="1" stopColor="#f0d040" />
            </linearGradient>
          </defs>
          <path d="M29 3.500a25 25 0 1 1-21 40" stroke="url(#arc)" />
        </svg>
        <span className="relative text-[23px] font-light">65</span>
        <span className="relative mt-[10px] text-[10px]">%</span>
      </div>
    </div>
  );
}

function Watermark() {
  return (
    <div className="pointer-events-none absolute bottom-[9px] right-2 z-20 flex items-center gap-[2px] opacity-90">
      <svg width="42" height="40" viewBox="0 0 42 40" aria-hidden="true">
        <defs>
          <linearGradient id="wmBlue" x1="1" y1="0" x2="0" y2="1">
            <stop offset="0" stopColor="#62c6f2" />
            <stop offset="1" stopColor="#4a7fc9" />
          </linearGradient>
          <linearGradient id="wmGreen" x1="1" y1="0" x2="0" y2="1">
            <stop offset="0" stopColor="#4fb98c" />
            <stop offset="1" stopColor="#9bd24a" />
          </linearGradient>
        </defs>
        <path d="M42 1C22-2 3 8 1 22c-.5 5 2 8 6 9C5 18 18 6 42 1z" fill="url(#wmBlue)" />
        <path d="M13 26c-1-8 6-15 14-16-5 3-9 8-7 11 2 2 6 4 5 7-2 3-9 2-12-2z" fill="url(#wmBlue)" />
        <path d="M28 10c6-1 13 3 13 10C41 31 26 38 3 39c14-3 27-8 29-16 1-5-1-10-4-13z" fill="url(#wmGreen)" />
      </svg>
      <p className="w-[108px] whitespace-nowrap">
        <span className="block text-[21px] font-bold leading-[25px] text-[#5b9fd8]">极光下载站</span>
        <span className="block font-['Liberation_Sans',sans-serif] text-[17px] font-bold leading-[18px] text-[#52b97c]">www.xz7.com</span>
      </p>
    </div>
  );
}

export default function App() {
  return (
    <div className="relative flex h-screen flex-col overflow-hidden bg-[#f6f7f9] font-['Noto_Sans','Noto_Sans_CJK_SC',sans-serif] text-xs text-[#232b3d]">
      <TitleBar />
      <MenuBar />
      <Ribbon />
      <main className="flex min-h-0 flex-1">
        <div className="flex min-w-0 flex-1 flex-col">
          <FormulaBar />
          <div className="flex min-h-0 flex-1">
            <Grid />
            <VScroll />
          </div>
          <SheetBar />
        </div>
        <SelectionPane />
        <SideRail />
      </main>
      <StatusBar />
      <FormatDialog />
      <SpeedWidget />
      <Watermark />
    </div>
  );
}
